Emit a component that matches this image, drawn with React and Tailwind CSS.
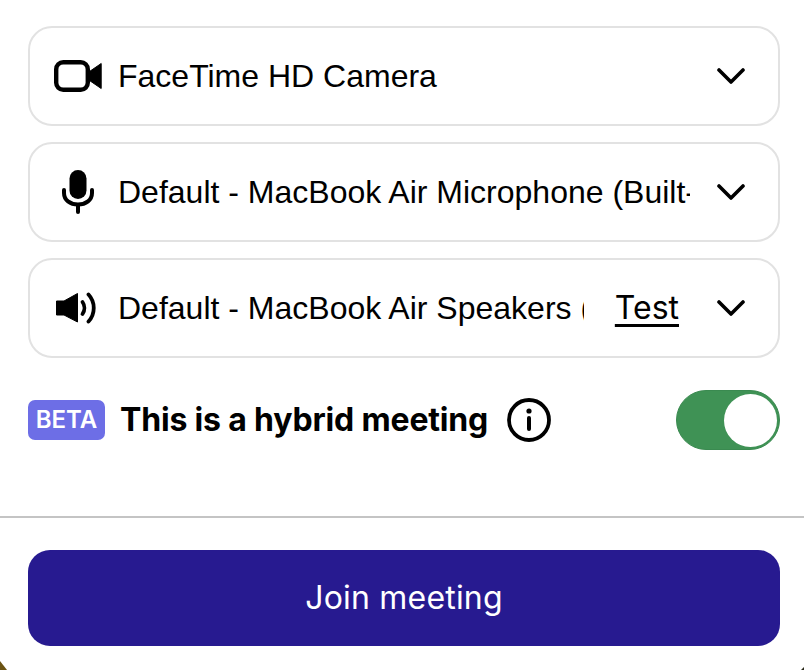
import React from "react";

const Chevron = () => (
  <svg width="28" height="16" viewBox="0 0 28 16" fill="none" className="shrink-0">
    <path d="M2 2 L14 14 L26 2" stroke="#000" strokeWidth="3.6" strokeLinecap="round" strokeLinejoin="round" />
  </svg>
);

const Camera = () => (
  <svg width="48" height="32" viewBox="0 0 48 32" fill="none">
    <rect x="2.2" y="2.2" width="31.6" height="27.6" rx="7" stroke="#000" strokeWidth="4.4" />
    <path d="M35.5 11.5 L47.2 3.5 V28.5 L35.5 20.5 Z" fill="#000" stroke="#000" strokeLinejoin="round" />
  </svg>
);

const Mic = () => (
  <svg width="32" height="44" viewBox="0 0 32 44" fill="none">
    <rect x="7.5" y="0" width="17" height="29" rx="8.5" fill="#000" />
    <path d="M2 20 V23 C2 30 8 34.5 16 34.5 C24 34.5 30 30 30 23 V20" stroke="#000" strokeWidth="4" strokeLinecap="round" />
    <path d="M16 35 V42" stroke="#000" strokeWidth="4" strokeLinecap="round" />
  </svg>
);

const Speaker = () => (
  <svg width="42" height="32" viewBox="0 0 42 32" fill="none">
    <path d="M0.5 9 H8 L21.5 1.5 V30 L8 23 H0.5 Z" fill="#000" stroke="#000" strokeLinejoin="round" />
    <path d="M26.5 10 C29 13.5 29 18.5 26.5 22" stroke="#000" strokeWidth="3.8" strokeLinecap="round" />
    <path d="M32.5 2.5 C39.5 10 39.5 22 32.5 29.5" stroke="#000" strokeWidth="3.8" strokeLinecap="round" />
  </svg>
);

const Info = () => (
  <svg width="44" height="44" viewBox="0 0 44 44" fill="none">
    <circle cx="22" cy="22" r="20" stroke="#000" strokeWidth="3.8" />
    <circle cx="22" cy="13" r="2.6" fill="#000" />
    <path d="M22 20 V31" stroke="#000" strokeWidth="4" strokeLinecap="round" />
  </svg>
);

function Row({ icon, label, test, textWidth }) {
  return (
    <div className="flex h-[100px] items-center rounded-[24px] border-2 border-[#e2e2e2] bg-white pl-[24px] pr-[33px]">
      <div className="flex w-[64px] shrink-0 items-center justify-start">{icon}</div>
      <div className={`${textWidth} overflow-hidden whitespace-nowrap font-['Liberation_Sans',sans-serif] text-[32px] leading-[40px] text-black`}>
        {label}
      </div>
      <div className="flex-1" />
      {test && (
        <span className="mr-[38px] font-['Inter',sans-serif] text-[32px] leading-[40px] text-black underline decoration-[3px] underline-offset-[5px]">
          Test
        </span>
      )}
      <Chevron />
    </div>
  );
}

export default function App() {
  return (
    <div className="relative h-[670px] w-[804px] overflow-hidden bg-white font-['Inter',sans-serif]">
      <div className="flex flex-col gap-4 pl-[28px] pr-[24px] pt-[26px]">
        <Row icon={<Camera />} label="FaceTime HD Camera" textWidth="w-[572px]" />
        <Row icon={<span className="ml-[8px] flex"><Mic /></span>} label="Default - MacBook Air Microphone (Built-in)" textWidth="w-[572px]" />
        <Row icon={<span className="ml-[2px] flex"><Speaker /></span>} label="Default - MacBook Air Speakers (Built-in)" textWidth="w-[466px]" test />
      </div>
      <div className="mt-[32px] flex h-[60px] items-center pl-[28px] pr-[24px]">
        <span className="flex h-[40px] w-[77px] items-center justify-center rounded-[7px] bg-[#6d6ee6] text-[24px] font-semibold text-white">
          BETA
        </span>
        <span className="ml-[15px] text-[32px] font-bold leading-[40px] tracking-[-0.17px] text-black">This is a hybrid meeting</span>
        <span className="ml-[19px] flex"><Info /></span>
        <div className="flex-1" />
        <div className="flex h-[60px] w-[104px] items-center justify-end rounded-full border border-[#3a8a50] bg-[#3f9255] pr-[2px]">
          <div className="h-[53px] w-[53px] rounded-full bg-white" />
        </div>
      </div>
      <div className="mt-[66px] h-[2px] bg-[#c4c4c4]" />
      <div className="ml-[28px] mr-[24px] mt-[32px] flex h-[96px] items-center justify-center rounded-[22px] bg-[#271a90] text-[32px] font-normal tracking-[0.2px] text-white">
        Join meeting
      </div>
      <svg className="absolute bottom-0 left-0" width="7" height="9" viewBox="0 0 7 9">
        <path d="M0 0 L7 9 H0 Z" fill="#6b5313" />
      </svg>
      <svg className="absolute bottom-0 right-0" width="3" height="3" viewBox="0 0 3 3">
        <path d="M3 0 V3 H0 Z" fill="#2b2a1a" />
      </svg>
    </div>
  );
}
